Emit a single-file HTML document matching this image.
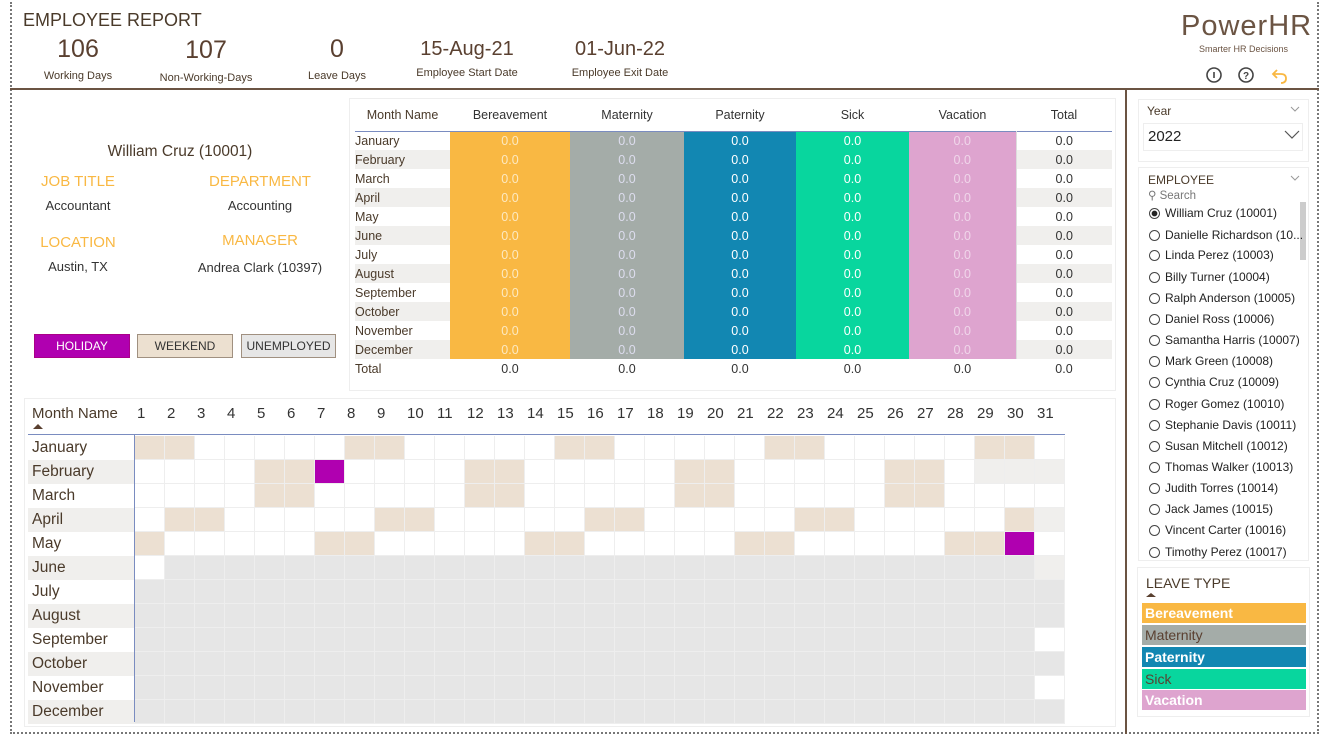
<!DOCTYPE html>
<html><head><meta charset="utf-8"><style>
*{box-sizing:border-box;margin:0;padding:0}
body{width:1327px;height:738px;background:#fff;font-family:"Liberation Sans",sans-serif;color:#5a4030;position:relative;overflow:hidden}
.a{position:absolute;white-space:nowrap}
.c{text-align:center}
.k{font-size:25px;color:#5a4030;text-align:center}
.kl{font-size:11px;color:#4a3a2a;text-align:center}
.hd{color:#f9b843;font-size:15px;text-align:center}
.v{font-size:13px;color:#333;text-align:center}
.box{position:absolute;border:1px solid #eee}
.lt td{font-size:12.5px;height:19px;padding:0;text-align:center;color:#333}
.emp{font-size:12px;color:#222;position:absolute;left:1149px}
.emp i{display:inline-block;width:11px;height:11px;border:1px solid #444;border-radius:50%;vertical-align:-2px;margin-right:5px}
.leg{position:absolute;left:1142px;width:164px;height:20px;font-size:14px;font-weight:bold;padding-left:3px;line-height:20px}
</style></head><body>
<!-- frame -->
<div class="a" style="left:10px;top:2px;width:1309px;height:732px;border:2px dotted #777;border-top:none"></div>
<div class="a" style="left:10px;top:88px;width:1309px;height:2px;background:#6b5443"></div>
<div class="a" style="left:1125px;top:89px;width:2px;height:645px;background:#6b5443"></div>

<div class="a" style="left:23px;top:10px;font-size:18px;color:#4a3a2a">EMPLOYEE REPORT</div>
<div class="a k" style="left:38px;top:35px;width:80px">106</div>
<div class="a kl" style="left:38px;top:70px;width:80px">Working Days</div>
<div class="a k" style="left:156px;top:36px;width:100px">107</div>
<div class="a kl" style="left:151px;top:72px;width:110px">Non-Working-Days</div>
<div class="a k" style="left:297px;top:35px;width:80px">0</div>
<div class="a kl" style="left:297px;top:70px;width:80px">Leave Days</div>
<div class="a k" style="left:407px;top:38px;width:120px;font-size:20px">15-Aug-21</div>
<div class="a kl" style="left:402px;top:67px;width:130px">Employee Start Date</div>
<div class="a k" style="left:560px;top:38px;width:120px;font-size:20px">01-Jun-22</div>
<div class="a kl" style="left:555px;top:67px;width:130px">Employee Exit Date</div>

<div class="a" style="left:1181px;top:10px;font-size:29px;color:#6b5443;letter-spacing:1px">PowerHR</div>
<div class="a" style="left:1199px;top:44px;font-size:9px;color:#6b5443">Smarter HR Decisions</div>
<svg class="a" style="left:1205px;top:66px" width="90" height="18">
<circle cx="9" cy="9" r="7" fill="none" stroke="#444" stroke-width="1.6"/><line x1="9" y1="6" x2="9" y2="12" stroke="#444" stroke-width="1.6"/>
<circle cx="41" cy="9" r="7" fill="none" stroke="#444" stroke-width="1.6"/><text x="41" y="13" font-size="10" font-weight="bold" text-anchor="middle" fill="#444" font-family="Liberation Sans">?</text>
<path d="M72 4 L68 8 L72 12 M68 8 H76 Q81 8 81 12.5 Q81 17 76 17" fill="none" stroke="#f9b843" stroke-width="1.8"/>
</svg>

<!-- left card -->
<div class="a c" style="left:80px;top:143px;width:200px;font-size:15.5px;color:#4a3a2a">William Cruz (10001)</div>
<div class="a hd" style="left:28px;top:173px;width:100px">JOB TITLE</div>
<div class="a v" style="left:28px;top:198px;width:100px">Accountant</div>
<div class="a hd" style="left:190px;top:173px;width:140px">DEPARTMENT</div>
<div class="a v" style="left:190px;top:198px;width:140px">Accounting</div>
<div class="a hd" style="left:28px;top:234px;width:100px">LOCATION</div>
<div class="a v" style="left:28px;top:259px;width:100px">Austin, TX</div>
<div class="a hd" style="left:190px;top:232px;width:140px">MANAGER</div>
<div class="a v" style="left:190px;top:260px;width:140px">Andrea Clark (10397)</div>
<div class="a c" style="left:34px;top:334px;width:96px;height:24px;background:#b000b0;border:1px solid #a08;color:#fff;font-size:12px;line-height:22px">HOLIDAY</div>
<div class="a c" style="left:137px;top:334px;width:96px;height:24px;background:#ece0d0;border:1px solid #a09080;color:#333;font-size:12px;line-height:22px">WEEKEND</div>
<div class="a c" style="left:241px;top:334px;width:95px;height:24px;background:#e6e6e6;border:1px solid #a09080;color:#333;font-size:12px;line-height:22px">UNEMPLOYED</div>

<!-- leave table -->
<div class="box" style="left:349px;top:98px;width:767px;height:293px"></div>
<table class="a lt" style="left:355px;top:100px;border-collapse:collapse;width:757px">
<tr style="height:31px;border-bottom:1px solid #7a8cc0"><td style="width:95px;color:#4a3a2a;font-size:12.5px">Month Name</td><td style="width:120px">Bereavement</td><td style="width:114px">Maternity</td><td style="width:112px">Paternity</td><td style="width:113px">Sick</td><td style="width:107px">Vacation</td><td>Total</td></tr>
<tbody id="lt"></tbody>
</table>

<!-- calendar -->
<div class="box" style="left:24px;top:398px;width:1092px;height:329px"></div>
<div class="a" style="left:32px;top:405px;font-size:15px;color:#4a3a2a">Month Name</div>
<div class="a" style="left:33px;top:424px;width:0;height:0;border-left:5px solid transparent;border-right:5px solid transparent;border-bottom:5px solid #5a4030"></div>
<div id="cal"></div>
<div class="a" style="left:28px;top:434px;width:1037px;height:1px;background:#7a8cc0"></div>
<div class="a" style="left:134px;top:435px;width:1px;height:287px;background:#7a8cc0"></div>

<!-- slicers -->
<div class="box" style="left:1138px;top:99px;width:171px;height:63px"></div>
<div class="a" style="left:1147px;top:104px;font-size:12px;color:#4a3a2a">Year</div>
<div class="a" style="left:1143px;top:123px;width:160px;height:28px;border:1px solid #eee"></div>
<div class="a" style="left:1148px;top:128px;font-size:15px;color:#222">2022</div>
<svg class="a" style="left:1284px;top:130px" width="16" height="10"><path d="M1 1 L8 8 L15 1" fill="none" stroke="#555" stroke-width="1.2"/></svg>
<svg class="a" style="left:1290px;top:106px" width="10" height="6"><path d="M1 1 L5 5 L9 1" fill="none" stroke="#999"/></svg>
<div class="box" style="left:1138px;top:167px;width:171px;height:394px"></div>
<div class="a" style="left:1148px;top:173px;font-size:12px;color:#4a3a2a">EMPLOYEE</div>
<svg class="a" style="left:1290px;top:175px" width="10" height="6"><path d="M1 1 L5 5 L9 1" fill="none" stroke="#999"/></svg>
<div class="a" style="left:1148px;top:188px;font-size:11.5px;color:#777">⚲ Search</div>
<div class="a" style="left:1300px;top:202px;width:6px;height:58px;background:#ccc"></div>
<div class="emp" style="top:206px"><i style="background:radial-gradient(#222 40%,#fff 50%)"></i>William Cruz (10001)</div>
<div class="emp" style="top:228px"><i></i>Danielle Richardson (10...</div>
<div class="emp" style="top:248px"><i></i>Linda Perez (10003)</div>
<div class="emp" style="top:270px"><i></i>Billy Turner (10004)</div>
<div class="emp" style="top:291px"><i></i>Ralph Anderson (10005)</div>
<div class="emp" style="top:312px"><i></i>Daniel Ross (10006)</div>
<div class="emp" style="top:333px"><i></i>Samantha Harris (10007)</div>
<div class="emp" style="top:354px"><i></i>Mark Green (10008)</div>
<div class="emp" style="top:375px"><i></i>Cynthia Cruz (10009)</div>
<div class="emp" style="top:397px"><i></i>Roger Gomez (10010)</div>
<div class="emp" style="top:418px"><i></i>Stephanie Davis (10011)</div>
<div class="emp" style="top:439px"><i></i>Susan Mitchell (10012)</div>
<div class="emp" style="top:460px"><i></i>Thomas Walker (10013)</div>
<div class="emp" style="top:481px"><i></i>Judith Torres (10014)</div>
<div class="emp" style="top:502px"><i></i>Jack James (10015)</div>
<div class="emp" style="top:523px"><i></i>Vincent Carter (10016)</div>
<div class="emp" style="top:545px"><i></i>Timothy Perez (10017)</div>

<div class="box" style="left:1137px;top:567px;width:173px;height:150px"></div>
<div class="a" style="left:1146px;top:575px;font-size:14px;color:#4a3a2a">LEAVE TYPE</div>
<div class="a" style="left:1146px;top:593px;width:0;height:0;border-left:5px solid transparent;border-right:5px solid transparent;border-bottom:4px solid #5a4030"></div>
<div class="leg" style="top:603px;background:#f9b843;color:#fff">Bereavement</div>
<div class="leg" style="top:625px;background:#a4aca8;color:#5a4030;font-weight:normal">Maternity</div>
<div class="leg" style="top:647px;background:#1287b2;color:#fff">Paternity</div>
<div class="leg" style="top:669px;background:#08d69e;color:#5a4030;font-weight:normal">Sick</div>
<div class="leg" style="top:690px;background:#dea4cf;color:#fff">Vacation</div>

<script>
var M=["January","February","March","April","May","June","July","August","September","October","November","December"];
var h="";
M.forEach(function(m,i){var bg=i%2?"#f0efed":"#fff";
h+='<tr style="background:'+bg+'"><td style="text-align:left;color:#4a3a2a">'+m+'</td><td style="background:#f9b843;color:#fde9c0">0.0</td><td style="background:#a4aca8;color:#dde">0.0</td><td style="background:#1287b2;color:#fff">0.0</td><td style="background:#08d69e;color:#fff">0.0</td><td style="background:#dea4cf;color:#f0d6ea">0.0</td><td style="border-left:1px solid #ddd">0.0</td></tr>';});
h+='<tr><td style="text-align:left;color:#4a3a2a">Total</td><td>0.0</td><td>0.0</td><td>0.0</td><td>0.0</td><td>0.0</td><td>0.0</td></tr>';
document.getElementById("lt").innerHTML=h;
var c="",x0=135,w=30,y0=436,rh=24;
for(var d=1;d<=31;d++)c+='<div class="a" style="left:'+(x0+(d-1)*w+2)+'px;top:405px;font-size:15px;color:#333">'+d+'</div>';
var dim=[31,28,31,30,31,30,31,31,30,31,30,31];
var hol={"1-7":1,"4-30":1};
for(var i=0;i<12;i++){var y=y0+i*rh,st=i%2?"#f0efed":"#fff";
c+='<div class="a" style="left:28px;top:'+y+'px;width:107px;height:'+rh+'px;background:'+st+';font-size:15.5px;color:#4a3a2a;padding:3px 4px">'+M[i]+'</div>';
for(var d=1;d<=31;d++){var col;
if(d>dim[i])col=st;else{var dt=new Date(2022,i,d),wd=dt.getDay();
if(hol[i+"-"+d])col="#b000b0";else if(i>5||(i==5&&d>1))col="#e6e6e6";else if(wd==0||wd==6)col="#ece0d2";else col="#fff";}
c+='<div class="a" style="left:'+(x0+(d-1)*w)+'px;top:'+y+'px;width:'+w+'px;height:'+rh+'px;background:'+col+';border-right:1px solid #eee;border-bottom:1px solid #eee"></div>';}}
document.getElementById("cal").innerHTML=c;
</script>
</body></html>
